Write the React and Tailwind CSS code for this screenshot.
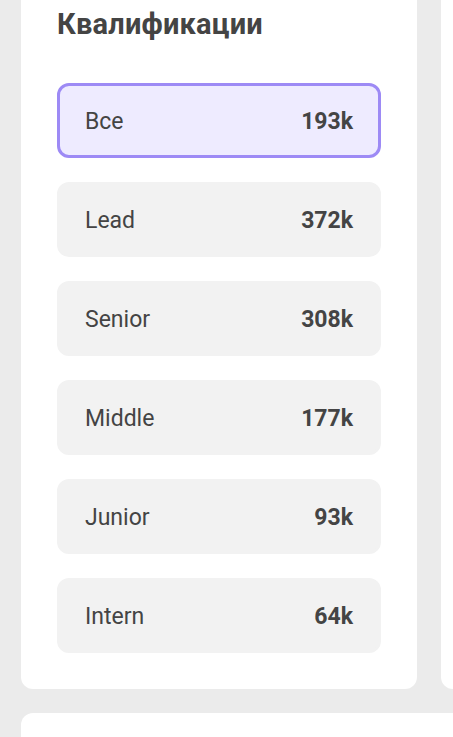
import React from 'react';

const levels = [
  { name: 'Все', count: '193k', active: true },
  { name: 'Lead', count: '372k' },
  { name: 'Senior', count: '308k' },
  { name: 'Middle', count: '177k' },
  { name: 'Junior', count: '93k' },
  { name: 'Intern', count: '64k' },
];

const App = () => {
  return (
    <div
      className="w-[453px] h-[737px] overflow-hidden bg-[#ebebeb] pl-[21px]"
      style={{ fontFamily: 'Roboto, "Noto Sans", sans-serif' }}
    >
      <div className="flex gap-[24px] w-[700px]">
        <div className="w-[396px] shrink-0 bg-white rounded-b-[12px] px-[36px] pb-[36px]">
          <h2 className="pt-[6px] text-[29px] leading-[36px] font-bold text-[#444] tracking-[0.2px]">
            Квалификации
          </h2>
          <div className="mt-[41px] flex flex-col gap-[24px]">
            {levels.map((l) => (
              <div
                key={l.name}
                className={`h-[75px] flex items-center justify-between rounded-[12px] px-[25px] pt-[4px] text-[23px] text-[#444] ${
                  l.active
                    ? 'bg-[#eeebff] border-[3px] border-[#9d8af5]'
                    : 'bg-[#f2f2f2] border-[3px] border-[#f2f2f2]'
                }`}
              >
                <span>{l.name}</span>
                <span className="font-bold">{l.count}</span>
              </div>
            ))}
          </div>
        </div>
        <div className="w-[300px] shrink-0 bg-white rounded-b-[12px]" />
      </div>
      <div className="mt-[24px] w-[500px] h-[100px] bg-white rounded-t-[12px]" />
    </div>
  );
};

export default App;
